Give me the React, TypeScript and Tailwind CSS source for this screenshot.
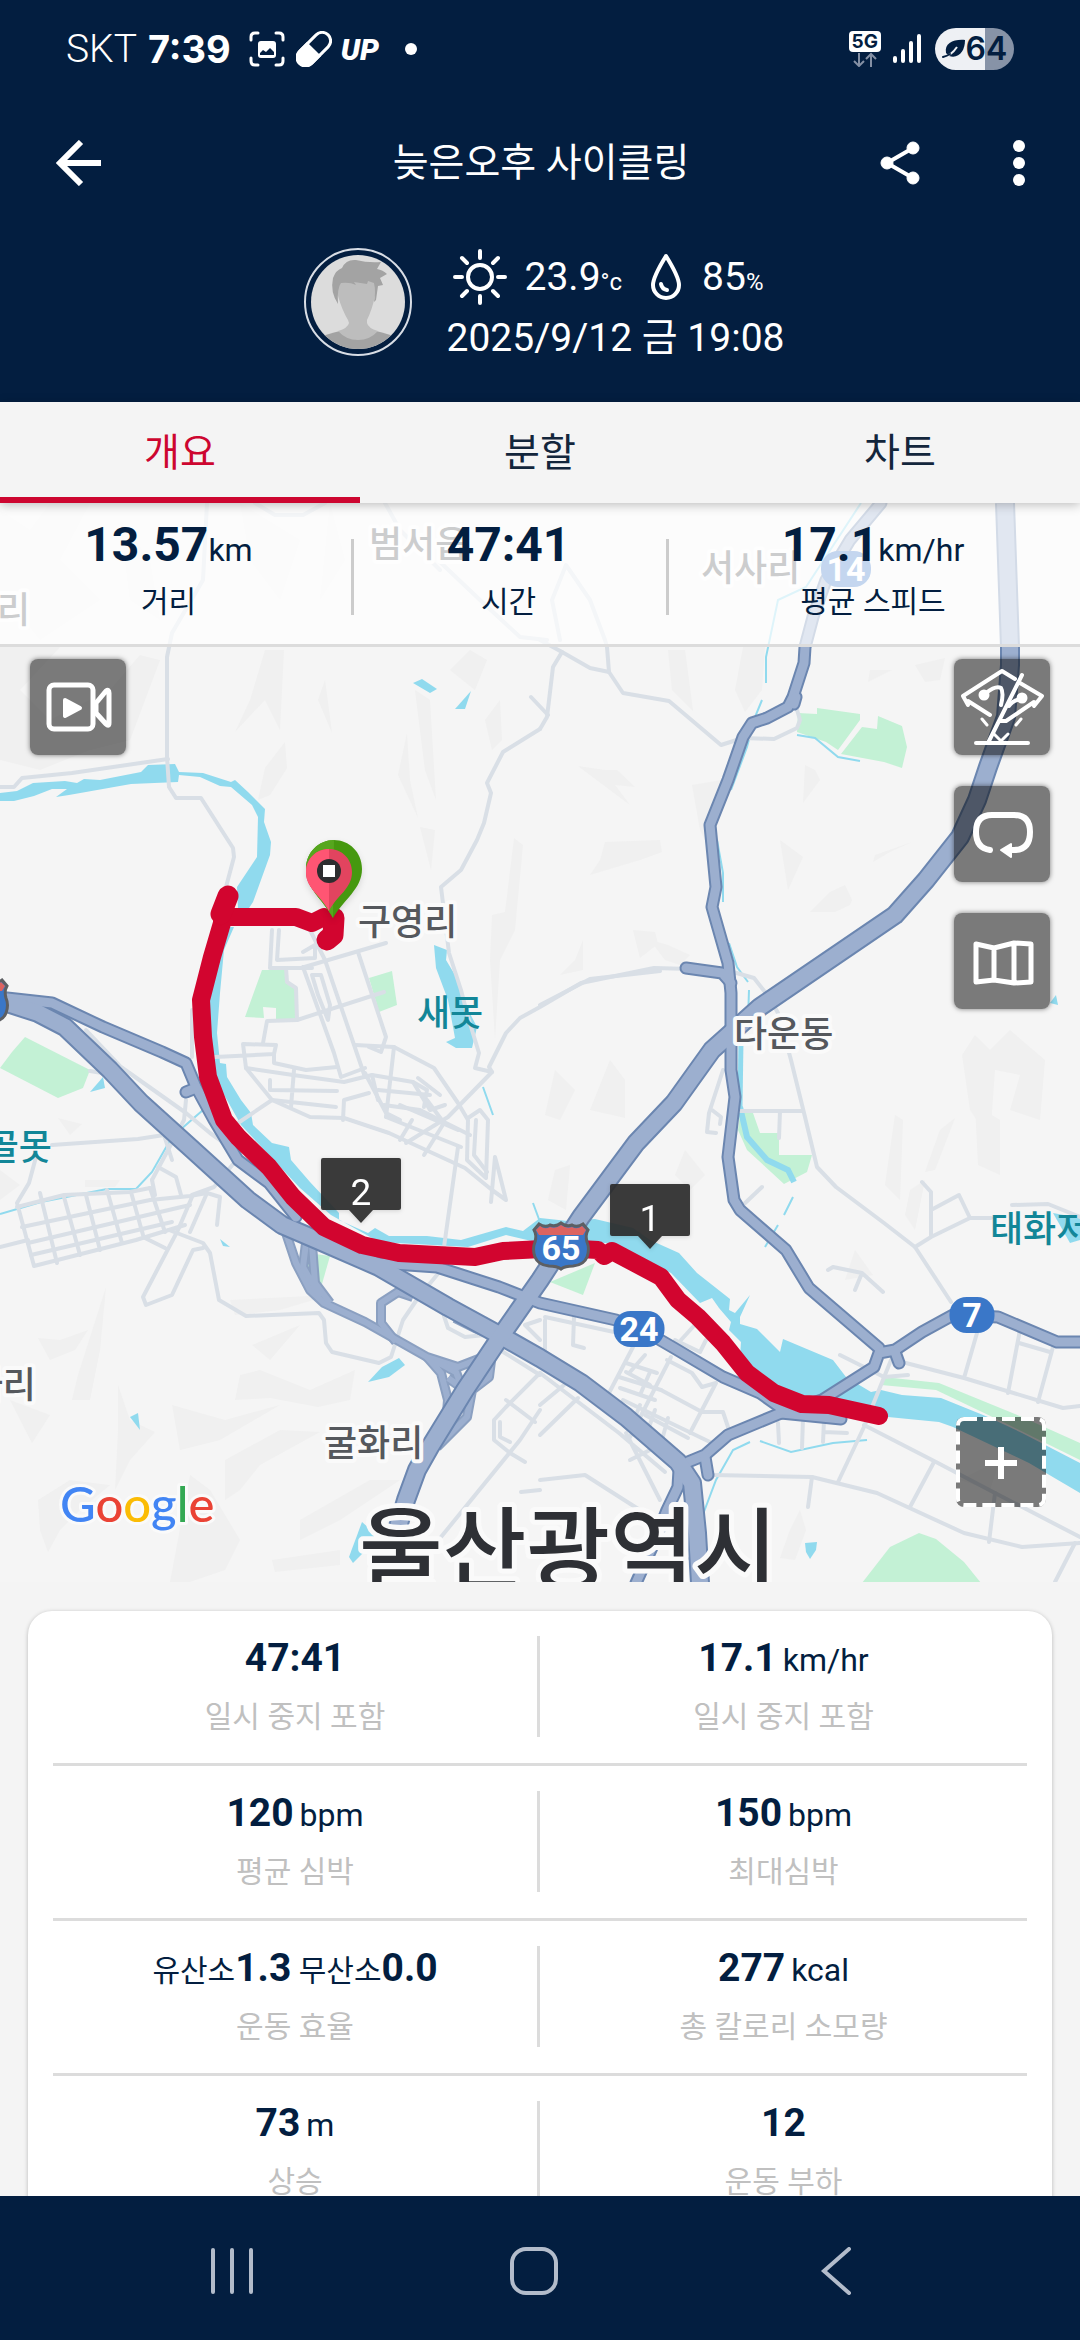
import { useState } from 'react';

interface StatPart {
  text: string;
  kind?: 'prefix' | 'unit';
}

interface Stat {
  parts: StatPart[];
  label: string;
}

const TABS = ['개요', '분할', '차트'];

const SUMMARY = [
  { value: '13.57', unit: 'km', label: '거리' },
  { value: '47:41', unit: '', label: '시간' },
  { value: '17.1', unit: 'km/hr', label: '평균 스피드' },
];

const ROWS: [Stat, Stat][] = [
  [
    { parts: [{ text: '47:41' }], label: '일시 중지 포함' },
    { parts: [{ text: '17.1' }, { text: 'km/hr', kind: 'unit' }], label: '일시 중지 포함' },
  ],
  [
    { parts: [{ text: '120' }, { text: 'bpm', kind: 'unit' }], label: '평균 심박' },
    { parts: [{ text: '150' }, { text: 'bpm', kind: 'unit' }], label: '최대심박' },
  ],
  [
    {
      parts: [
        { text: '유산소', kind: 'prefix' },
        { text: '1.3' },
        { text: ' 무산소', kind: 'prefix' },
        { text: '0.0' },
      ],
      label: '운동 효율',
    },
    { parts: [{ text: '277' }, { text: 'kcal', kind: 'unit' }], label: '총 칼로리 소모량' },
  ],
  [
    { parts: [{ text: '73' }, { text: 'm', kind: 'unit' }], label: '상승' },
    { parts: [{ text: '12' }], label: '운동 부하' },
  ],
];

// ---- map geometry ----

const HILLS = [
  '0,647 60,647 20,690 50,720 110,690 140,655 160,660 130,740 90,750 40,770 0,760',
  '0,510 30,530 50,503 90,503 60,560 100,600 40,640 0,590',
  '120,520 150,560 160,620 130,600',
  '240,503 300,540 280,600 250,560',
  '330,503 345,560 320,600',
  '265,650 284,650 280,730 265,700 235,732 250,700',
  '325,680 332,733 318,700',
  '285,742 287,768 270,795 258,800 265,768',
  '407,733 410,780 418,818 398,775',
  '415,690 430,700 436,800 425,770',
  '450,670 470,650 487,660 475,690',
  '485,720 500,700 502,740 492,750',
  '420,827 435,830 431,870',
  '514,838 523,845 515,930 500,960 495,1040 490,960 492,915 505,912',
  '743,647 765,647 762,690 745,712 735,690',
  '668,650 685,650 693,711 672,690',
  '578,766 605,770 617,770 635,787 615,785 630,805',
  '692,785 722,780 710,850 700,830',
  '805,765 815,770 820,780 803,803',
  '605,842 660,840 662,852 640,860 590,875 600,860',
  '875,855 912,842 890,852 873,862',
  '845,885 852,900 850,905 835,912 810,912 830,892',
  '690,955 680,965 665,960 650,940 668,945',
  '633,930 655,932 658,944 640,958',
  '583,940 583,970 560,975 575,960',
  '915,665 945,658 940,680 925,682',
  '870,670 892,670 868,682',
  '780,840 803,857 788,890',
  '962,1055 975,1035 990,1050 1010,1030 1045,1060 1040,1120 1010,1110 1020,1075 995,1070 990,1140 970,1110',
  '895,1115 903,1120 900,1200 885,1185',
  '940,1130 955,1118 935,1170 925,1172',
  '975,1105 1000,1120 1000,1175 978,1165',
  '910,1190 925,1180 915,1230 905,1215',
  '855,1250 873,1275 845,1280',
  '555,1070 575,1090 560,1120 545,1115',
  '610,1060 625,1080 625,1118 590,1110',
  '555,1170 570,1165 566,1210 548,1200',
  '685,1150 705,1175 690,1190 675,1175',
  '58,1118 82,1124 70,1135',
  '0,1170 20,1185 0,1200',
  '85,1180 120,1180 115,1187 85,1187',
  '10,1400 50,1415 32,1443',
  '38,1338 60,1340 88,1330 75,1350 50,1360',
  '78,1375 106,1287 100,1350 90,1400 72,1400',
  '118,1385 130,1420 155,1432 130,1460 115,1490 118,1430',
  '230,1300 330,1295 280,1310 235,1315',
  '252,1345 300,1325 270,1360',
  '240,1375 260,1370 310,1390 355,1370 350,1400 318,1407 270,1398 235,1400',
  '172,1405 225,1420 280,1405 220,1440 180,1450',
  '225,1460 280,1430 320,1432 260,1465 240,1490 225,1500',
  '38,1500 70,1480 110,1485 80,1510 60,1530 48,1552 40,1530',
  '190,1475 210,1490 240,1540 225,1570 190,1582 170,1582',
  '272,1560 340,1550 340,1565 275,1572',
  '300,1520 370,1480 400,1480 340,1520 300,1540',
  '790,1530 800,1510 806,1530 795,1560 780,1558',
  '960,1480 1000,1460 990,1490',
  '600,1240 640,1230 650,1262 625,1255',
];

const PARKS = [
  '262,970 286,970 286,980 297,988 296,1019 276,1019 276,1008 263,1007 264,1018 245,1017',
  '369,978 392,971 397,1005 379,1012',
  '25,1037 90,1070 83,1088 58,1098 0,1068 12,1052',
  '798,713 817,714 817,708 860,714 860,720 838,750 826,742 797,732',
  '862,727 877,729 878,716 902,726 907,747 902,768 884,762 841,754',
  '740,1113 753,1113 760,1133 779,1133 779,1155 812,1155 807,1172 784,1184 747,1150 738,1130',
  '550,1282 595,1263 583,1295',
  '300,1252 330,1256 322,1284 305,1280',
  '884,1377 939,1383 1022,1417 1080,1443 1080,1460 1005,1423 936,1390 881,1385',
  '862,1583 890,1547 919,1533 936,1539 964,1562 981,1583',
];

const WATER = [
  '0,793 17,791 33,783 65,781 77,783 84,779 100,780 141,772 148,765 175,764 179,772 203,773 231,782 235,780 248,792 265,809 264,822 271,842 270,855 253,902 249,908 238,908 237,887 257,857 258,817 252,805 231,787 220,786 200,777 179,775 178,782 131,784 69,795 56,797 67,789 52,789 34,796 14,801 0,801',
  '234,927 224,950 220,993 217,1033 220,1063 226,1064 227,1077 241,1100 251,1113 253,1125 272,1143 289,1147 291,1160 310,1182 339,1213 339,1220 368,1233 375,1228 389,1236 427,1236 461,1240 506,1227 523,1231 540,1218 568,1221 595,1219 633,1228 650,1240 679,1253 697,1273 730,1299 729,1310 735,1313 750,1295 740,1317 740,1324 757,1329 780,1352 783,1339 833,1360 846,1377 871,1392 881,1390 902,1395 941,1398 988,1417 1022,1433 1080,1463 1080,1493 1029,1463 953,1427 939,1422 888,1417 850,1402 798,1397 774,1383 740,1357 741,1342 729,1330 731,1322 719,1308 712,1298 700,1303 671,1273 609,1243 540,1243 506,1235 468,1247 379,1242 331,1215 300,1188 269,1155 241,1125 227,1100 217,1083 210,1033 208,993 220,947 227,927',
  '434,945 447,950 446,960 458,980 463,1000 477,1027 472,1048 456,1048 446,1042 455,1038 448,1000 436,968',
  '413,683 422,679 437,689 430,693',
  '471,691 465,709 455,709',
  '368,1382 382,1367 399,1358 405,1365 389,1377',
  '130,1417 138,1413 140,1430',
  '362,1522 379,1537 353,1563 349,1557',
  '220,1239 230,1247 223,1246',
  '103,1077 105,1088 90,1092',
  '805,1543 817,1542 816,1550 810,1559 806,1552',
  '1053,1213 1080,1218 1080,1240 1070,1243',
  '1050,1003 1058,1005 1056,995',
];

const CREEKS = [
  'M0 1214 41 1202 107 1189 136 1189 152 1172 172 1137 203 1110',
  'M861 503 806 587 778 600 766 657 766 683M762 700 755 717 747 747 731 790',
  'M717 840 723 873 723 902M729 943 737 967 748 982M749 990 748 1020',
  'M797 735 815 738 838 757 860 761',
  'M750 1442 733 1450 716 1480 702 1517M760 1441 791 1452 833 1443 867 1440',
  'M793 1197 784 1215M778 1225 765 1247M483 1087 493 1115M533 1203 540 1222',
];

const STREETS = [
  'M207 503 203 580 172 633 167 657 167 757 169 787 176 798 201 798 233 848 234 857 226 887',
  'M255 503 275 515 303 515 325 503M385 503 400 530 440 570M560 640 552 600 566 565 590 600 605 640 607 647',
  'M440 562 480 600 520 637 547 640',
  'M0 787 14 787 22 778 72 773 168 759',
  'M540 729 503 752 487 783 491 793 484 823 477 840 461 870 441 887 449 953 461 990 468 1017 479 1053 475 1068 492 1072 489 1067 506 1033 520 1018 540 1007 581 983 654 968 726 970 754 978 769 997 778 1013 791 1060 805 1117 817 1167 836 1187 884 1223 915 1247 951 1302',
  'M540 1005 590 979 660 971M531 697 548 715M540 640 562 652 590 668 609 672 623 693 669 701 721 745 743 738 774 739 797 728 800 720 795 703',
  'M607 647 609 672M562 652 553 667 547 717 540 729',
  'M736 1111 802 1111M780 1111 779 1138M723 1070 709 1113 707 1132 716 1133M712 1110 721 1117 720 1124',
  'M272 930 270 968 312 968M279 930 277 960 315 958 315 945 303 952M310 930 325 960 365 1077',
  'M301 968 386 943M303 967 334 1053 341 1077 365 1068M286 968 287 982 296 988 297 1020 384 992',
  'M297 1020 267 1021 263 1043M358 952 386 1037 381 1052 369 1047M312 975 321 975 330 1005 328 1020 318 995Z',
  'M355 1045 394 1047 434 1068 458 1103 468 1120 467 1160 486 1178 488 1120 480 1110 468 1118',
  'M215 1057 274 1054 276 1045 243 1044 246 1068 272 1100 310 1117 344 1118 389 1133 465 1168 492 1190 506 1200 499 1172 495 1157 491 1202',
  'M274 1054 274 1063 306 1070 337 1067M246 1068 293 1075 344 1082 372 1075 413 1082 427 1090 424 1107',
  'M270 1080 270 1090 337 1091M272 1100 336 1107M294 1070 291 1107M394 1047 386 1117M365 1073 386 1113 400 1120',
  'M343 1120 344 1100 369 1093M492 1072 448 1117 406 1143M386 1117 461 1147M378 1090 430 1095M384 1105 420 1110 470 1135',
  'M413 1082 430 1110 445 1105M427 1100 444 1123 424 1155M372 1075 378 1100M412 1120 400 1140M400 1105 458 1130M418 1078 440 1095',
  'M476 1120 474 1155 487 1172M458 1147 444 1247M238 1123 272 1100',
  'M52 1145 138 1139 164 1135 172 1160M36 1157 29 1183 17 1203 34 1266 136 1240 185 1225',
  'M17 1207 64 1195 130 1192 150 1188M22 1227 150 1200 190 1196 207 1193 220 1197 217 1225M28 1243 190 1205M31 1255 172 1222',
  'M40 1193 57 1263M64 1197 80 1255M86 1195 100 1250M107 1190 122 1243M131 1192 143 1235M150 1188 165 1232M152 1180 155 1195M0 1247 28 1240',
  'M192 1197 178 1230 143 1297 146 1305 172 1295 193 1250 203 1248M207 1193 190 1232M145 1238 165 1248',
  'M169 1230 203 1243 210 1253 219 1300 246 1316 319 1313 324 1320 326 1343 332 1352 379 1363 391 1357 403 1320 418 1298 441 1270',
  'M443 1313 448 1328 465 1337 485 1335 500 1350 540 1375',
  'M86 1030 121 1067 186 1113 210 1133 234 1150 234 1163 214 1187 192 1195M186 1100 184 1120 152 1180M158 1167 176 1177 181 1195',
  'M192 1057 192 1010M90 1071 108 1074',
  'M540 1373 506 1407 494 1420 494 1440 510 1453 525 1462M540 1410 520 1440 441 1537M506 1400 535 1422M500 1422 500 1437 510 1442M540 1320 525 1325 540 1340',
  'M540 1480 585 1475 643 1512M540 1373 619 1433 665 1472M540 1405 564 1385M540 1435 578 1398M626 1433 660 1500M630 1460 650 1450',
  'M712 1475 812 1477 877 1493 964 1533 1022 1547 1080 1543M864 1425 936 1462 995 1493 1080 1537',
  'M891 1360 864 1427 838 1482M934 1462 910 1507M995 1493 989 1542M812 1477 808 1507M1075 1543 1055 1582',
  'M840 1355 884 1377 908 1375M902 1362 964 1378 1063 1408 1080 1406M977 1333 964 1378M1020 1330 1008 1393M1019 1343 1050 1352M1053 1347 1038 1402',
  'M922 1182 931 1192 931 1237 915 1247M931 1210 959 1195 970 1218 991 1218M931 1237 970 1218M1012 1205 1048 1204 1080 1217',
  'M828 1270 833 1267 862 1273 883 1292M862 1273 855 1290M743 1205 762 1187',
  'M545 1317 614 1332M574 1317 573 1345 584 1348M545 1320 545 1350M681 1340 702 1317M675 1340 700 1352 706 1340',
  'M633 1347 609 1393M671 1357 630 1437M667 1360 692 1373 702 1387 716 1383 690 1433M661 1390 702 1412 723 1412 729 1430',
  'M626 1363 657 1373M619 1377 661 1390M623 1400 712 1443M645 1415 688 1438M620 1388 655 1400M640 1405 632 1425M650 1372 640 1395M655 1410 648 1430M668 1418 662 1440M626 1372 650 1385M645 1355 630 1372',
  'M778 1423 779 1443M803 1418 802 1448M824 1420 823 1442M824 1432 847 1433M521 1492 540 1490',
];

const RAMPS = [
  'M286 1233 296 1263 310 1290 324 1303 365 1322 427 1357 458 1367 489 1355',
  'M306 1243 303 1267 320 1297M312 1245 315 1283 330 1303',
  'M413 1297 398 1292 381 1303 381 1323 396 1342',
  'M427 1357 441 1373 448 1400 446 1425M434 1360 456 1372 462 1388 448 1378',
  'M492 1353 489 1377 472 1390 467 1417 437 1447',
  'M455 1318 475 1328 490 1334',
];

const ROADS = [
  'M881 503 850 540 826 580 813 617 805 647 804 663 793 697 788 707 767 718 752 723 743 737 728 780 710 825 716 887 712 907 728 963 731 993 731 1070 735 1097 728 1157 734 1200 740 1210 786 1250 809 1288 879 1348',
  'M686 968 722 973 731 983',
  'M1080 1342 1057 1342 998 1317 953 1315 922 1332 895 1350 879 1353 874 1367 822 1400 781 1413 728 1435 705 1455 688 1462',
  'M895 1352 899 1363M705 1457 708 1475M781 1413 841 1419',
  'M7 998 52 1003 103 1027 162 1052 186 1063 196 1087 214 1120 238 1160 269 1183 296 1217',
  'M186 1092 196 1088M796 697 794 704',
  'M379 1263 437 1267 499 1287 540 1303 616 1320 643 1330 674 1348 723 1377 760 1393 784 1410',
  'M679 1470 678 1487 667 1510 654 1543 636 1583',
];

const HIGHWAYS = [
  'M7 1003 38 1013 65 1027 110 1070 141 1103 193 1150 248 1200 282 1225 317 1240 379 1267 448 1307 503 1337 540 1358 581 1383 626 1417 678 1462 692 1483 697 1533 700 1583',
  'M1005 503 1010 647 1010 665 1006 717 988 767 977 800 960 837 926 880 895 915 826 962 760 1007 712 1050 674 1103 636 1143 581 1217 540 1280 503 1333 465 1390 430 1447 417 1470 406 1500 386 1567 379 1583',
];

const ROUTE =
  'M227 897 222 913 222 923 212 957 201 1000 203 1037 208 1077 224 1120 238 1137 269 1167 293 1197 324 1227 362 1245 399 1253 475 1257 503 1251 561 1248 598 1250 604 1256 612 1251 661 1277 678 1300 698 1317 723 1343 747 1373 774 1393 802 1404 829 1405 879 1416';
const ROUTE_SPUR = 'M222 917 296 917 312 923 324 917 334 923 333 933 327 940';

interface LabelProps {
  x: number;
  y: number;
  children: string;
  water?: boolean;
  anchor?: 'start' | 'middle' | 'end';
}

function MapLabel({ x, y, children, water, anchor = 'start' }: LabelProps) {
  return (
    <text
      x={x}
      y={y}
      textAnchor={anchor}
      stroke="#fafafa"
      strokeWidth={water ? 0 : 8}
      strokeLinejoin="round"
      paintOrder="stroke"
      className={water ? 'fill-[#128698] text-[36px] font-medium' : 'fill-[#55585d] text-[36px] font-medium'}
    >
      {children}
    </text>
  );
}

function Shield({ x, y, text }: { x: number; y: number; text?: string }) {
  return (
    <g transform={`translate(${x} ${y})`}>
      <path
        d="M-22-23Q-16-19-11-22Q-5-20 0-24Q5-20 11-22Q16-19 22-23L27-17Q24-12 26-5Q29 2 26 10Q23 18 12 19Q4 19 0 22Q-4 19-12 19Q-23 18-26 10Q-29 2-26-5Q-24-12-27-17Z"
        fill="#3a77c8"
        stroke="#5d5f63"
        strokeWidth="3"
      />
      <path d="M-21-21Q-16-17-11-20Q-5-18 0-22Q5-18 11-20Q16-17 21-21L25-17L22-12H-22L-25-17Z" fill="#dc6360" />
      {text && (
        <text y="13" textAnchor="middle" className="fill-white text-[34px] font-bold">
          {text}
        </text>
      )}
    </g>
  );
}

function RoadBadge({ x, y, w, text }: { x: number; y: number; w: number; text: string }) {
  return (
    <g transform={`translate(${x} ${y})`}>
      <rect x={-w / 2} y="-18" width={w} height="36" rx="17" fill="#3a77c8" />
      <text y="12" textAnchor="middle" className="fill-white text-[34px] font-bold">
        {text}
      </text>
    </g>
  );
}

function LapFlag({ x, y, text }: { x: number; y: number; text: string }) {
  return (
    <g transform={`translate(${x} ${y})`} className="drop-shadow-sm">
      <path d="M-38-65H38Q40-65 40-63V-15Q40-13 38-13H12L0 0L-12-13H-38Q-40-13-40-15V-63Q-40-65-38-65Z" fill="#2b2b2b" fillOpacity="0.92" />
      <text y="-18" textAnchor="middle" className="fill-white text-[37px]">
        {text}
      </text>
    </g>
  );
}

function RideMap() {
  return (
    <svg
      viewBox="0 503 1080 1079"
      preserveAspectRatio="xMidYMin slice"
      className="block h-full w-full"
      role="img"
      aria-label="주행 경로 지도"
    >
      <rect y="503" width="1080" height="1080" fill="#f5f5f5" />
      <g fill="#f0f0f0">
        {HILLS.map((p) => (
          <polygon key={p} points={p} />
        ))}
      </g>
      <g fill="#c3f1d5">
        {PARKS.map((p) => (
          <polygon key={p} points={p} />
        ))}
      </g>
      <g fill="#90daee">
        {WATER.map((p) => (
          <polygon key={p} points={p} />
        ))}
      </g>
      <g fill="none" stroke="#90daee" strokeWidth="2">
        {CREEKS.map((d) => (
          <path key={d} d={d} />
        ))}
        <path d="M741 1040 740 1107" strokeWidth="5" />
        <path d="M740 1107 747 1137 767 1160 788 1170 794 1182" strokeWidth="6" />
      </g>
      <g fill="none" stroke="#d9dfe6" strokeWidth="4" strokeLinejoin="round" strokeLinecap="round">
        {STREETS.map((d) => (
          <path key={d} d={d} />
        ))}
      </g>
      <g fill="none" strokeLinejoin="round">
        <g stroke="#8ba0c1" strokeWidth="10">
          {RAMPS.map((d) => (
            <path key={d} d={d} />
          ))}
        </g>
        <g stroke="#9cafcf" strokeWidth="6">
          {RAMPS.map((d) => (
            <path key={d} d={d} />
          ))}
        </g>
        <g stroke="#6b86b0" strokeWidth="13" strokeLinecap="round">
          {ROADS.map((d) => (
            <path key={d} d={d} />
          ))}
        </g>
        <g stroke="#6b86b0" strokeWidth="20">
          {HIGHWAYS.map((d) => (
            <path key={d} d={d} />
          ))}
        </g>
        <g stroke="#9cafcf" strokeWidth="9" strokeLinecap="round">
          {ROADS.map((d) => (
            <path key={d} d={d} />
          ))}
        </g>
        <g stroke="#9cafcf" strokeWidth="16">
          {HIGHWAYS.map((d) => (
            <path key={d} d={d} />
          ))}
        </g>
      </g>

      <g fontFamily="Roboto, 'Noto Sans CJK KR', sans-serif">
        <MapLabel x={369} y={557}>범서읍</MapLabel>
        <MapLabel x={701} y={581}>서사리</MapLabel>
        <MapLabel x={30} y={623} anchor="end">리</MapLabel>
        <RoadBadge x={846} y={569} w={50} text="14" />
      </g>

      <g fill="none" stroke="#d2052f" strokeLinejoin="round" strokeLinecap="round">
        <path d={ROUTE} strokeWidth="18" />
        <path d={ROUTE_SPUR} strokeWidth="18" />
        <path d="M228 896 221 914M334 918 333 935 327 940" strokeWidth="21" />
      </g>

      <g fontFamily="Roboto, 'Noto Sans CJK KR', sans-serif">
        <Shield x={561} y={1247} text="65" />
        <Shield x={-20} y={1003} />
        <RoadBadge x={639} y={1329} w={51} text="24" />
        <RoadBadge x={972} y={1315} w={45} text="7" />
        <MapLabel x={358} y={935}>구영리</MapLabel>
        <MapLabel x={734} y={1047}>다운동</MapLabel>
        <MapLabel x={324} y={1456}>굴화리</MapLabel>
        <MapLabel x={36} y={1398} anchor="end">사리</MapLabel>
        <MapLabel x={417} y={1026} water>새못</MapLabel>
        <MapLabel x={52} y={1160} anchor="end" water>골못</MapLabel>
        <MapLabel x={990} y={1242} water>태화저</MapLabel>
        <text
          x="359"
          y="1583"
          stroke="#fafafa"
          strokeWidth="10"
          strokeLinejoin="round"
          paintOrder="stroke"
          className="fill-[#2e3035] text-[91px] font-medium"
        >
          울산광역시
        </text>
        <LapFlag x={361} y={1223} text="2" />
        <LapFlag x={650} y={1249} text="1" />
      </g>

      {/* start pin behind, finish pin in front */}
      <g className="drop-shadow-md">
        <path d="M334 840C349 840 362 852 362 869C362 889 344 899 333 918C323 899 306 889 306 869C306 852 319 840 334 840Z" fill="#45980f" />
        <path d="M334 840C319 840 306 852 306 869C306 889 323 899 333 918Z" fill="#56a61e" />
        <path d="M329 849C342 849 352 859 352 872C352 889 337 895 329 911C321 895 306 889 306 872C306 859 316 849 329 849Z" fill="#e2445f" />
        <path d="M329 849C316 849 306 859 306 872C306 889 321 895 329 911Z" fill="#ff5573" />
        <circle cx="329" cy="871" r="12" fill="#2d2d2f" />
        <rect x="323" y="865" width="12" height="12" fill="#fff" />
      </g>

      <text
        x="60"
        y="1522"
        stroke="#fafafa"
        strokeWidth="6"
        strokeLinejoin="round"
        paintOrder="stroke"
        fontFamily="Lato, sans-serif"
        className="text-[49px] font-medium"
      >
        <tspan fill="#4285f4">G</tspan>
        <tspan fill="#ea4335">o</tspan>
        <tspan fill="#fbbc05">o</tspan>
        <tspan fill="#4285f4">g</tspan>
        <tspan fill="#34a853">l</tspan>
        <tspan fill="#ea4335">e</tspan>
      </text>
    </svg>
  );
}

function StatusBar() {
  return (
    <div className="flex h-[98px] items-center justify-between px-[66px]">
      <div className="flex items-center">
        <span className="text-[39px] font-light">SKT</span>
        <span className="ml-[11px] font-['Inter'] text-[38px] font-bold">7:39</span>
        <svg viewBox="0 0 36 36" className="ml-[18px] size-[36px]" fill="none" stroke="#fff" strokeWidth="3" strokeLinecap="round">
          <path d="M2 9V6Q2 2 6 2H9M27 2H30Q34 2 34 6V9M34 27V30Q34 34 30 34H27M9 34H6Q2 34 2 30V27" />
          <rect x="9" y="10" width="18" height="17" rx="3" fill="#fff" stroke="none" />
          <path d="M11 24V22L14 19L17 21L21 17L25 21V24Z" fill="#031e40" stroke="none" />
        </svg>
        <svg viewBox="0 0 36 36" className="ml-[11px] size-[36px]">
          <g transform="rotate(45 18 18)">
            <rect x="9.500" y="-2" width="17" height="40" rx="8.500" fill="none" stroke="#fff" strokeWidth="3" />
            <path d="M8 18H28V30A10 10 0 0 1 8 30Z" fill="#fff" />
          </g>
        </svg>
        <span className="ml-[9px] text-[30px] font-black italic">UP</span>
        <span className="ml-[26px] size-[12px] rounded-full bg-white" />
      </div>
      <div className="flex items-center">
        <div className="flex flex-col items-center">
          <span className="rounded-[4px] bg-white px-[3px] font-['Inter'] text-[19px] leading-[21px] font-bold text-[#031e40]">5G</span>
          <svg viewBox="0 0 24 15" className="h-[15px] w-[24px]" fill="none" stroke="#8590a4" strokeWidth="2">
            <path d="M6 1V14M1 9L6 14L11 9M18 15V2M13 7L18 2L23 7" />
          </svg>
        </div>
        <svg viewBox="0 0 28 30" className="ml-[12px] h-[30px] w-[28px]" stroke="#fff" strokeWidth="4" strokeLinecap="round">
          <path d="M2 24V27M10 17V27M18 9V27M26 2V27" />
        </svg>
        <div className="ml-[14px] flex h-[42px] w-[79px] items-center justify-center rounded-full bg-linear-to-r from-[#eef0f4] from-63% to-[#8793a7] to-63% text-[#031e40]">
          <svg viewBox="0 0 24 20" className="h-[20px] w-[24px]">
            <path d="M4 14C2 4 12 0 23 1C23 12 17 20 7 17Z" fill="#031e40" />
            <path d="M1 18Q9 17 15 8" fill="none" stroke="#eef0f4" strokeWidth="2" />
            <path d="M1 18Q5 17 8 15" fill="none" stroke="#031e40" strokeWidth="2" strokeLinecap="round" />
          </svg>
          <span className="font-['Inter'] text-[32px] leading-none font-semibold">64</span>
        </div>
      </div>
    </div>
  );
}

function TitleBar() {
  return (
    <div className="grid grid-cols-[1fr_auto_1fr] items-center pt-[37px] pr-[54px] pl-[56px]">
      <button type="button" aria-label="뒤로" className="justify-self-start">
        <svg viewBox="0 0 46 46" className="size-[46px]" fill="none" stroke="#fff" strokeWidth="6">
          <path d="M45 23H5M25 2L4 23L25 44" />
        </svg>
      </button>
      <h1 className="text-[39px] leading-[56px]">늦은오후 사이클링</h1>
      <div className="flex items-center gap-[92px] justify-self-end">
        <button type="button" aria-label="공유">
          <svg viewBox="0 0 40 44" className="h-[44px] w-[40px]" fill="#fff" stroke="#fff">
            <path d="M33 7L7 22L33 37" fill="none" strokeWidth="4" />
            <circle cx="33" cy="7" r="6" />
            <circle cx="7" cy="22" r="6" />
            <circle cx="33" cy="37" r="6" />
          </svg>
        </button>
        <button type="button" aria-label="더보기">
          <svg viewBox="0 0 14 48" className="h-[48px] w-[14px]" fill="#fff">
            <circle cx="7" cy="7" r="6" />
            <circle cx="7" cy="24" r="6" />
            <circle cx="7" cy="41" r="6" />
          </svg>
        </button>
      </div>
    </div>
  );
}

function Avatar() {
  return (
    <svg viewBox="0 0 108 108" className="size-[108px]">
      <defs>
        <clipPath id="face">
          <circle cx="54" cy="54" r="47" />
        </clipPath>
      </defs>
      <circle cx="54" cy="54" r="53" fill="none" stroke="#d8dde5" strokeWidth="2" />
      <g clipPath="url(#face)">
        <rect width="108" height="108" fill="#dcdcdc" />
        <path d="M10 92Q22 86 36 83H72Q86 86 98 92V108H10Z" fill="#a3a3a3" />
        <path d="M34 83Q44 80 45 75L44 72Q38 62 34 48V32H71V48Q68 62 63 72V75Q64 80 74 83Q66 92 54 92Q42 92 34 83Z" fill="#bdbdbd" />
        <path d="M34 56Q26 44 29 30Q32 22 38 20Q42 11 52 12Q64 15 77 14L73 21Q79 22 83 26L76 30L79 37L74 38L72 52L70 54Q72 44 70 35L64 33L63 36L50 34L52 37Q46 34 37 35Q33 40 34 56Z" fill="#a3a3a3" />
      </g>
    </svg>
  );
}

function RideInfo() {
  return (
    <div className="flex items-center justify-center gap-[35px] pt-[45px] pb-[34px] pl-[8px]">
      <Avatar />
      <div className="pt-[12px]">
        <div className="flex h-[58px] items-center">
          <svg viewBox="0 0 56 58" className="ml-[5px] h-[58px] w-[56px]" fill="none" stroke="#fff" strokeWidth="4" strokeLinecap="round">
            <circle cx="28" cy="29" r="12" />
            <path d="M28 3V10M28 48V55M3 29H10M46 29H53M10 10L15 15M46 10L41 15M10 48L15 43M46 48L41 43" />
          </svg>
          <span className="ml-[17px] text-[39px] leading-[56px]">
            23.9<span className="text-[24px] leading-none">°c</span>
          </span>
          <svg viewBox="0 0 30 48" className="ml-[29px] h-[48px] w-[30px]" fill="none" stroke="#fff" strokeWidth="4" strokeLinecap="round">
            <path d="M15 3Q2 24 2 32A13 13 0 0 0 28 32Q28 24 15 3Z" strokeLinejoin="round" />
            <path d="M10 31Q11 36 16 37" />
          </svg>
          <span className="ml-[21px] text-[39px] leading-[56px]">
            85<span className="text-[24px] leading-none">%</span>
          </span>
        </div>
        <p className="h-[62px] text-[39px] leading-[64px]">2025/9/12 금 19:08</p>
      </div>
    </div>
  );
}

function ToolButton({ label, children }: { label: string; children: React.ReactNode }) {
  return (
    <button type="button" aria-label={label} className="size-[96px] rounded-[8px] bg-black/50 shadow-[0_0_5px_rgba(0,0,0,0.5)]">
      <svg viewBox="0 0 96 96" className="size-full" fill="none" stroke="#fff" strokeWidth="5" strokeLinecap="round" strokeLinejoin="round">
        {children}
      </svg>
    </button>
  );
}

function MapSection() {
  return (
    <section className="relative h-[1079px] shrink-0 overflow-hidden">
      <RideMap />
      <div className="absolute inset-0 flex flex-col">
        <dl className="grid h-[144px] grid-cols-[351fr_315fr_414fr] border-b-3 border-[#dcdcdc] bg-white/70 pt-[12px]">
          {SUMMARY.map((s, i) => (
            <div
              key={s.label}
              className={`relative flex flex-col-reverse justify-end text-center ${i === 0 ? 'pr-[14px]' : ''}`}
            >
              {i > 0 && <span className="absolute top-[24px] left-0 h-[76px] w-[3px] bg-[#cccccc]" />}
              <dt className="text-[30px] leading-[44px]">{s.label}</dt>
              <dd className="text-[32px] leading-[60px]">
                <b className="text-[48px] font-bold">{s.value}</b>
                {s.unit}
              </dd>
            </div>
          ))}
        </dl>
        <div className="flex items-start justify-between px-[30px] pt-[12px]">
          <ToolButton label="영상">
            <rect x="19" y="26" width="44" height="44" rx="5" />
            <path d="M66 44L76 32Q79 30 79 34V64Q79 68 76 65L66 54Z" />
            <path d="M35 41L50 49L35 57Z" fill="#fff" strokeWidth="4" />
          </ToolButton>
          <div className="flex flex-col gap-[31px]">
            <ToolButton label="3D 지도">
              <path d="M61 20L48 12L9 37L14 46L14 42L36 56M66 24L88 37L80 47V43L52 62L47 62M68 16L35 82" strokeWidth="4" />
              <path d="M32 34Q42 26 47 29Q50 34 47 46M66 40Q58 42 55 47" strokeWidth="4" />
              <circle cx="30" cy="36" r="4" fill="#fff" strokeWidth="3" />
              <circle cx="68" cy="39" r="4" fill="#fff" strokeWidth="3" />
              <path d="M28 60L33 66M67 60L62 66M54 75L47 82L39 74" strokeWidth="3" />
              <path d="M22 84H74" strokeWidth="4" />
            </ToolButton>
            <ToolButton label="다시 재생">
              <path d="M36 64Q22 62 22 46Q22 29 38 29H60Q76 29 76 46Q76 64 60 64H56" strokeWidth="6" />
              <path d="M47 64L57 58V71Z" fill="#fff" strokeWidth="2" />
            </ToolButton>
            <ToolButton label="지도 종류">
              <path d="M22 31L40 35L60 30L77 31V69L60 70L40 67L22 69ZM40 35V67M60 30V70" />
            </ToolButton>
          </div>
        </div>
      </div>
      <button type="button" aria-label="추가" className="absolute right-[34px] bottom-[75px] size-[90px] rounded-[8px] bg-black/50">
        <svg viewBox="0 0 90 90" className="size-full" fill="none" stroke="#fff">
          <rect x="2" y="2" width="86" height="86" rx="6" strokeWidth="4" strokeDasharray="13 6" />
          <path d="M29 46H61M45 30V62" strokeWidth="6" />
        </svg>
      </button>
    </section>
  );
}

function StatCell({ stat }: { stat: Stat }) {
  return (
    <div className="flex flex-1 flex-col-reverse justify-end text-center">
      <dt className="mt-[12px] text-[30px] leading-[44px] text-[#c0c0c0]">{stat.label}</dt>
      <dd className="text-[30px] leading-[44px] whitespace-pre">
        {stat.parts.map((p) => {
          if (p.kind === 'prefix') return <span key={p.text}>{p.text}</span>;
          if (p.kind === 'unit') {
            return (
              <span key={p.text} className="ml-[6px] text-[32px]">
                {p.text}
              </span>
            );
          }
          return (
            <b key={p.text} className="text-[39px] font-bold">
              {p.text}
            </b>
          );
        })}
      </dd>
    </div>
  );
}

function NavBar() {
  return (
    <nav className="flex h-[144px] shrink-0 items-center justify-center gap-[254px] bg-[#031e40] pt-[6px] pr-[12px]">
      <button type="button" aria-label="최근 앱">
        <svg viewBox="0 0 48 48" className="size-[48px]" stroke="#b3bccb" strokeWidth="4" strokeLinecap="round">
          <path d="M5 3V45M24 3V45M43 3V45" />
        </svg>
      </button>
      <button type="button" aria-label="홈">
        <svg viewBox="0 0 48 48" className="size-[48px]" fill="none" stroke="#b3bccb" strokeWidth="4">
          <rect x="2" y="2" width="44" height="44" rx="14" />
        </svg>
      </button>
      <button type="button" aria-label="뒤로 가기">
        <svg viewBox="0 0 48 48" className="size-[48px]" fill="none" stroke="#b3bccb" strokeWidth="4" strokeLinecap="round">
          <path d="M37 2L12 24L37 46" />
        </svg>
      </button>
    </nav>
  );
}

export default function App() {
  const [tab, setTab] = useState('개요');

  return (
    <div className="flex h-screen flex-col overflow-hidden bg-[#f4f4f4] font-['Roboto','Noto_Sans_CJK_KR',sans-serif] text-[#031e40]">
      <header className="shrink-0 bg-[#031e40] text-white">
        <StatusBar />
        <TitleBar />
        <RideInfo />
      </header>

      <div role="tablist" className="relative z-10 grid h-[101px] shrink-0 grid-cols-3 bg-[#f4f4f4] shadow-[0_2px_10px_rgba(0,0,0,0.25)]">
        {TABS.map((t) => (
          <button
            key={t}
            type="button"
            role="tab"
            aria-selected={tab === t}
            onClick={() => setTab(t)}
            className={`border-b-6 pt-[8px] text-[39px] ${tab === t ? 'border-[#cd0630] text-[#cd0630]' : 'border-transparent text-[#13263c]'}`}
          >
            {t}
          </button>
        ))}
      </div>

      <main className="flex flex-1 flex-col overflow-hidden">
        <MapSection />
        <div className="mx-[28px] mt-[29px] shrink-0 rounded-t-[24px] bg-white px-[25px] pb-[25px] shadow-[0_1px_4px_rgba(0,0,0,0.25)]">
          {ROWS.map(([left, right], i) => (
            <dl key={i} className="grid grid-cols-2 border-b-3 border-[#dcdcdc] pt-[25px] pb-[26px] last:border-b-0">
              <div className="flex h-[101px] border-r-3 border-[#dcdcdc]">
                <StatCell stat={left} />
              </div>
              <div className="flex h-[101px]">
                <StatCell stat={right} />
              </div>
            </dl>
          ))}
        </div>
      </main>

      <NavBar />
    </div>
  );
}
